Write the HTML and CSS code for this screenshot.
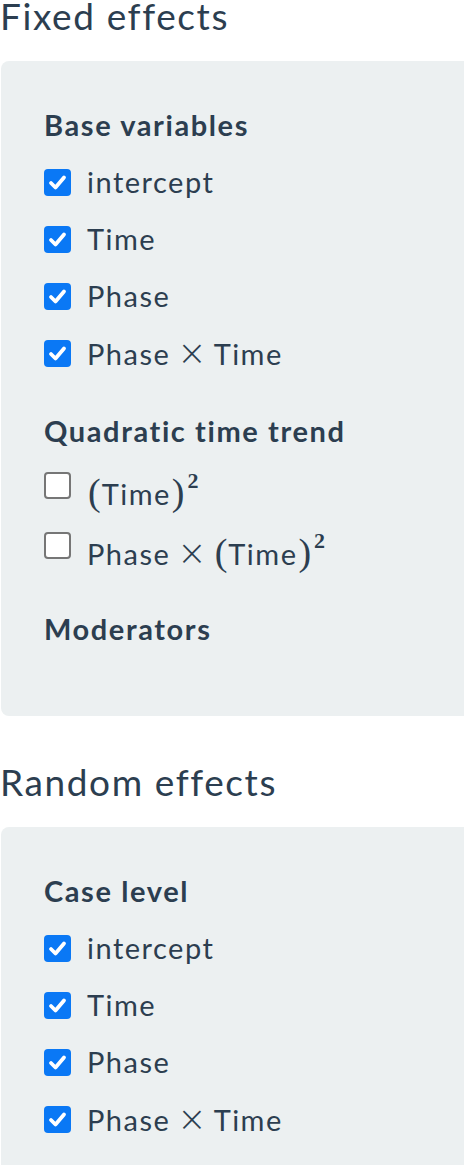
FILE: index.html
```html
<!DOCTYPE html>
<html lang="en">
<head>
    <meta charset="UTF-8">
    <meta name="viewport" content="width=device-width, initial-scale=1.0">
    <title>Model terms</title>
    <link rel="stylesheet" href="styles.css">
</head>
<body>
    <h4 class="section-title">Fixed effects</h4>
    <div class="well">
        <div class="group">
            <div class="group-label">Base variables</div>
            <div class="options">
                <label class="option"><span class="box checked"><svg viewBox="0 0 27 27"><polyline points="7,14 11.5,18.5 20,8.5"/></svg></span><span class="option-text">intercept</span></label>
                <label class="option"><span class="box checked"><svg viewBox="0 0 27 27"><polyline points="7,14 11.5,18.5 20,8.5"/></svg></span><span class="option-text">Time</span></label>
                <label class="option"><span class="box checked"><svg viewBox="0 0 27 27"><polyline points="7,14 11.5,18.5 20,8.5"/></svg></span><span class="option-text">Phase</span></label>
                <label class="option"><span class="box checked"><svg viewBox="0 0 27 27"><polyline points="7,14 11.5,18.5 20,8.5"/></svg></span><span class="option-text">Phase<span class="times">&times;</span>Time</span></label>
            </div>
        </div>
        <div class="group">
            <div class="group-label">Quadratic time trend</div>
            <div class="options">
                <label class="option math"><span class="box"></span><span class="option-text"><span class="paren">(</span>Time<span class="paren">)</span><sup>2</sup></span></label>
                <label class="option math"><span class="box"></span><span class="option-text">Phase<span class="times">&times;</span><span class="paren">(</span>Time<span class="paren">)</span><sup>2</sup></span></label>
            </div>
        </div>
        <div class="group">
            <div class="group-label">Moderators</div>
            <div class="options"></div>
        </div>
    </div>

    <h4 class="section-title">Random effects</h4>
    <div class="well">
        <div class="group">
            <div class="group-label">Case level</div>
            <div class="options">
                <label class="option"><span class="box checked"><svg viewBox="0 0 27 27"><polyline points="7,14 11.5,18.5 20,8.5"/></svg></span><span class="option-text">intercept</span></label>
                <label class="option"><span class="box checked"><svg viewBox="0 0 27 27"><polyline points="7,14 11.5,18.5 20,8.5"/></svg></span><span class="option-text">Time</span></label>
                <label class="option"><span class="box checked"><svg viewBox="0 0 27 27"><polyline points="7,14 11.5,18.5 20,8.5"/></svg></span><span class="option-text">Phase</span></label>
                <label class="option"><span class="box checked"><svg viewBox="0 0 27 27"><polyline points="7,14 11.5,18.5 20,8.5"/></svg></span><span class="option-text">Phase<span class="times">&times;</span>Time</span></label>
            </div>
        </div>
    </div>
</body>
</html>
```

FILE: styles.css
```css
* {
    margin: 0;
    padding: 0;
    box-sizing: border-box;
}

body {
    font-family: Lato, "Open Sans", sans-serif;
    color: #2c3e50;
    background-color: white;
    overflow: hidden;
}

.section-title {
    font-size: 37px;
    font-weight: 400;
    letter-spacing: 1.6px;
    line-height: 32px;
    margin-bottom: 29px;
}

.well + .section-title {
    margin-top: 50px;
}

/* Grey panel holding the checkbox groups */
.well {
    background-color: #ecf0f1;
    border-radius: 8px;
    margin: 0 -24px 0 1px;
    padding: 44px 43px 50px;
    display: flex;
    flex-direction: column;
    gap: 38px;
}

.group-label {
    font-size: 29px;
    font-weight: 700;
    letter-spacing: 1.6px;
    line-height: 40px;
    margin-bottom: 17px;
}

.options {
    display: flex;
    flex-direction: column;
    gap: 17px;
}

.option {
    display: flex;
    align-items: center;
    height: 40px;
    font-size: 29px;
    letter-spacing: 1.5px;
    line-height: 40px;
    cursor: pointer;
}

.option.math {
    align-items: flex-start;
    height: 43px;
}

.option.math .box {
    margin-top: 4px;
}

.option.math .option-text {
    padding-top: 4px;
}

/* Checkbox square */
.box {
    flex: none;
    width: 27px;
    height: 27px;
    border: 2px solid #767676;
    border-radius: 4px;
    background-color: white;
    display: flex;
    align-items: center;
    justify-content: center;
}

.box.checked {
    border: none;
    background-color: #0a78f5;
}

.box svg {
    width: 27px;
    height: 27px;
}

.box polyline {
    fill: none;
    stroke: white;
    stroke-width: 3.8;
    stroke-linecap: round;
    stroke-linejoin: round;
}

.option-text {
    margin-left: 16px;
    white-space: nowrap;
}

.times {
    font-family: "DejaVu Sans", sans-serif;
    font-weight: 200;
    font-size: 35px;
    letter-spacing: 0;
    margin: 0 7px 0 7px;
}

.paren {
    font-family: "Liberation Serif", serif;
    font-size: 38px;
    letter-spacing: 0;
    margin: 0 1px;
}

sup {
    font-family: "Liberation Serif", serif;
    font-weight: 700;
    font-size: 22px;
    letter-spacing: 0;
    vertical-align: 17px;
    line-height: 0;
    margin-left: 2px;
}
```
